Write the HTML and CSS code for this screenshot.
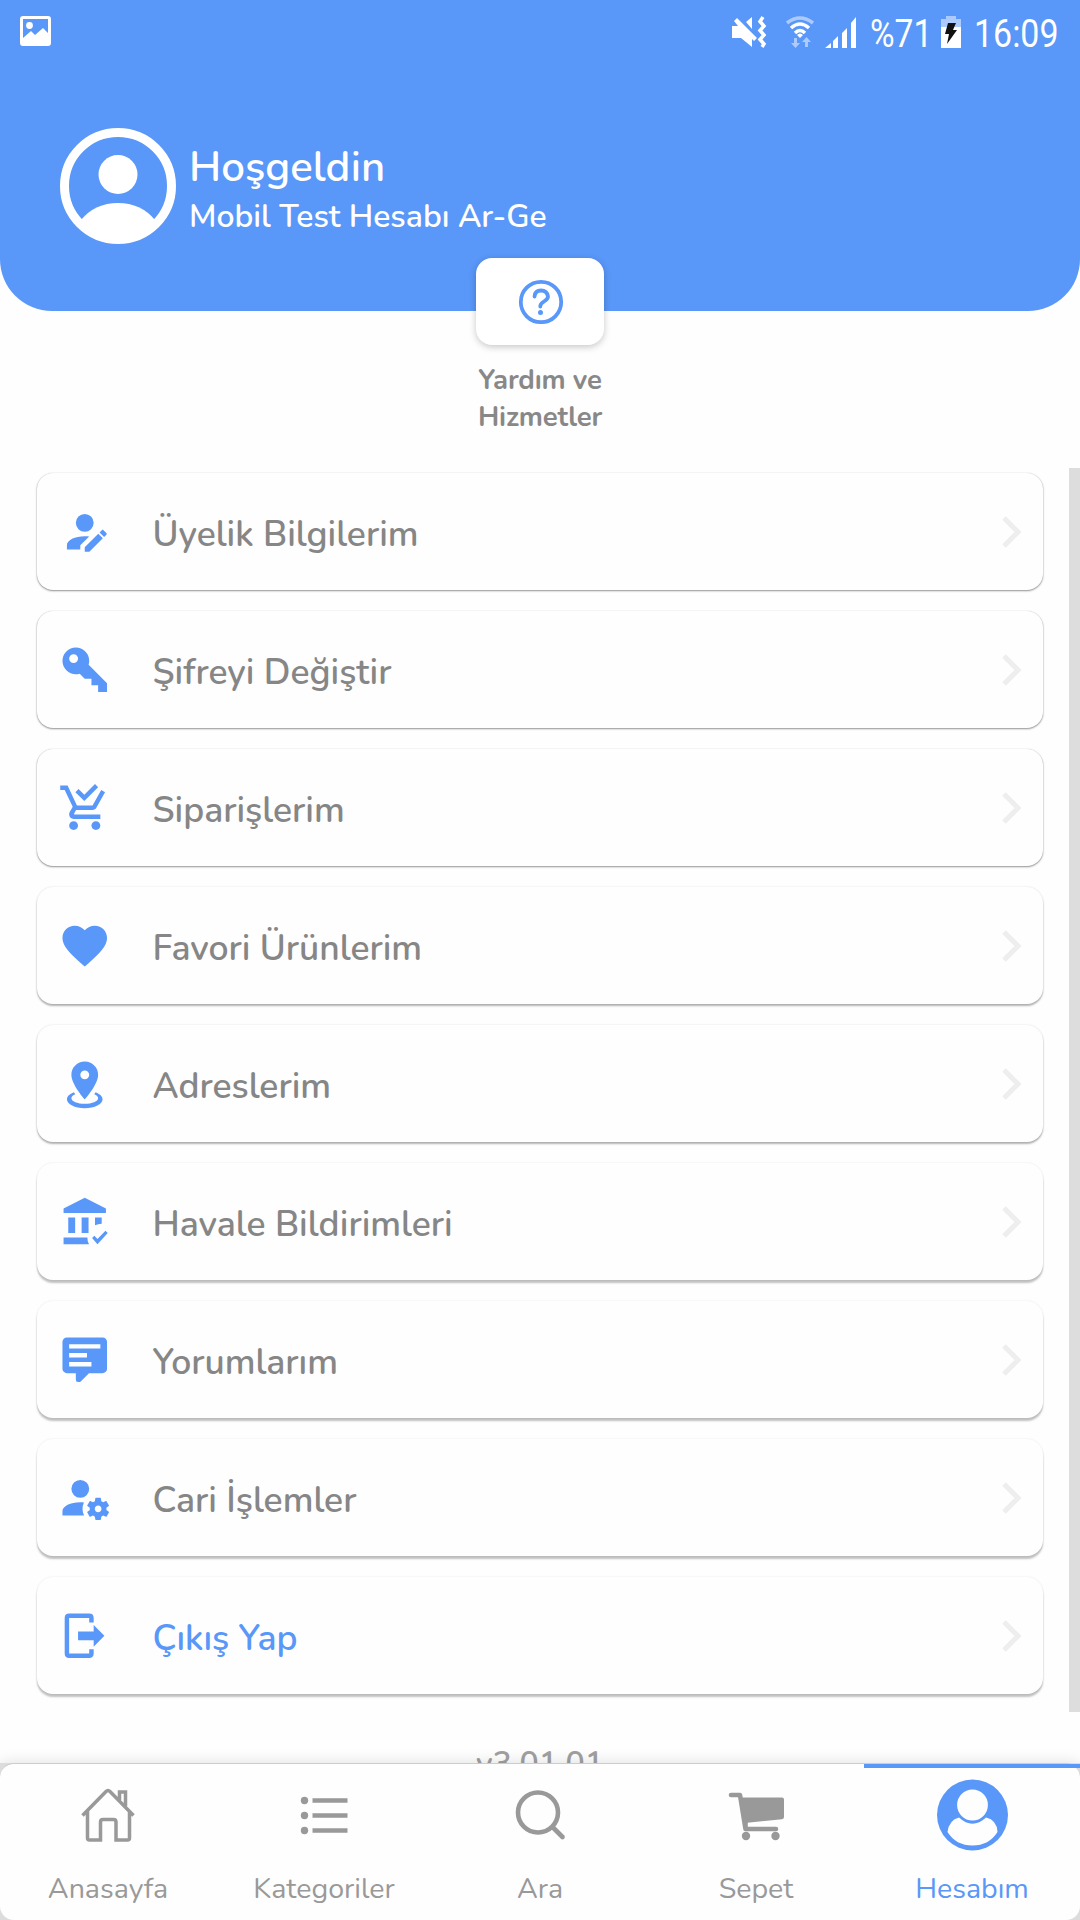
FILE: index.html
```html
<!DOCTYPE html>
<html lang="tr">
<head>
<meta charset="utf-8">
<title>Hesabım</title>
<link rel="stylesheet" href="styles.css">
</head>
<body>
<div class="screen">
  <header class="header">
    <div class="status">
      <svg class="st-image" viewBox="0 0 32 32"><path fill-rule="evenodd" d="M3 0H28Q31 0 31 3V27Q31 30 28 30H3Q0 30 0 27V3Q0 0 3 0ZM3 3V22L11 15L15 19L23 12L28 17V3Z"/><circle cx="9.500" cy="9.500" r="3.400"/></svg>
      <div class="status-right">
        <svg class="st-mute" viewBox="0 0 36 34"><path d="M0 11H6L2 6L5 3L25 23L22 26L20 24V32L9 23H0ZM14 7L20 2V14Z"/><path class="line" d="M31 2L28 6.500L32 11L28 15.500L32 20L28 24.500L32 29L30 32"/></svg>
        <svg class="st-wifi" viewBox="0 0 30 34"><g class="line"><path class="dim" d="M2 8Q15-2 28 8"/><path d="M6 13Q15 5 24 13M10 18Q15 13 20 18"/></g><path d="M12 20Q15 17 18 20L15 23Z"/><path class="dim" d="M9 23H12V28H15L10.500 33L6 28H9ZM20 32H23V27H26L21.500 22L17 27H20Z"/></svg>
        <svg class="st-signal" viewBox="0 0 32 32"><path d="M0 32L6 27V32ZM8 25L13 20V32H8ZM17 17L22 12V32H17ZM26 7L31 1V32H26Z"/></svg>
        <span class="st-text percent">%71</span>
        <svg class="st-battery" viewBox="0 0 20 32"><path class="dim" d="M5 0H15V3H20V11H0V3H5Z"/><path d="M0 11H20V32H0Z"/><path class="bolt" d="M7 7H15L12 14H16L6 28L8 18H4Z"/></svg>
        <span class="st-text clock">16:09</span>
      </div>
    </div>
    <div class="profile">
      <svg class="avatar" viewBox="0 0 116 116"><circle class="ring" cx="58" cy="58" r="53.500"/><circle cx="58" cy="46.500" r="19.500"/><path d="M21 92Q35 75 58 75T95 92Q79 113 58 113T21 92Z"/></svg>
      <div class="welcome"><div class="hello">Hoşgeldin</div><div class="name">Mobil Test Hesabı Ar-Ge</div></div>
    </div>
  </header>
  <section class="help">
    <div class="help-card"><svg viewBox="0 0 46 46"><circle cx="23" cy="23" r="20.200"/><path d="M16.500 17.500Q17 11.500 23 11.500T30 17.500Q30 20 26 22.500T22.300 27.500"/><circle class="dot" cx="22.500" cy="33.500" r="2.500"/></svg></div>
    <div class="help-label">Yardım ve<br>Hizmetler</div>
  </section>
  <main class="content">
    <ul class="menu">
      <li><svg class="icon" viewBox="0 0 24 24"><path d="M21.700 13.350L20.700 14.350L18.650 12.300L19.650 11.300C19.860 11.090 20.210 11.090 20.420 11.300L21.700 12.580C21.910 12.790 21.910 13.140 21.700 13.350M12 18.940L18.060 12.880L20.110 14.930L14.060 21H12V18.940M12 14C7.580 14 4 15.790 4 18V20H10V18.110L14 14.110C13.340 14.030 12.670 14 12 14M12 4A4 4 0 0 0 8 8A4 4 0 0 0 12 12A4 4 0 0 0 16 8A4 4 0 0 0 12 4Z"/></svg><span>Üyelik Bilgilerim</span><svg class="chevron" viewBox="0 0 20 34"><path d="M2 3L16 17L2 31"/></svg></li>
      <li><svg class="icon" viewBox="0 0 24 24"><path d="M22 18V22H18V19H15V16H12L9.740 13.740C9.190 13.910 8.610 14 8 14A6 6 0 0 1 2 8A6 6 0 0 1 8 2A6 6 0 0 1 14 8C14 8.610 13.910 9.190 13.740 9.740L22 18M7 5A2 2 0 0 0 5 7A2 2 0 0 0 7 9A2 2 0 0 0 9 7A2 2 0 0 0 7 5Z"/></svg><span>Şifreyi Değiştir</span><svg class="chevron" viewBox="0 0 20 34"><path d="M2 3L16 17L2 31"/></svg></li>
      <li><svg class="icon" viewBox="0 0 24 24"><path d="M9 20C9 21.100 8.100 22 7 22S5 21.100 5 20 5.900 18 7 18 9 18.900 9 20M17 18C15.900 18 15 18.900 15 20S15.900 22 17 22 19 21.100 19 20 18.100 18 17 18M7.200 14.800V14.700L8.100 13H15.500C16.200 13 16.900 12.600 17.200 12L21.100 5L19.400 4L15.500 11H8.500L4.300 2H1V4H3L6.600 11.600L5.200 14C5.100 14.300 5 14.600 5 15C5 16.100 5.900 17 7 17H19V15H7.400C7.300 15 7.200 14.900 7.200 14.800M18 2.800L16.600 1.400L11.800 6.200L9.200 3.600L7.800 5L11.800 9L18 2.800Z"/></svg><span>Siparişlerim</span><svg class="chevron" viewBox="0 0 20 34"><path d="M2 3L16 17L2 31"/></svg></li>
      <li><svg class="icon" viewBox="0 0 24 24"><path d="M12 21.350L10.550 20.030C5.400 15.360 2 12.270 2 8.500C2 5.410 4.420 3 7.500 3C9.240 3 10.910 3.810 12 5.080C13.090 3.810 14.760 3 16.500 3C19.580 3 22 5.410 22 8.500C22 12.270 18.600 15.360 13.450 20.030L12 21.350Z"/></svg><span>Favori Ürünlerim</span><svg class="chevron" viewBox="0 0 20 34"><path d="M2 3L16 17L2 31"/></svg></li>
      <li><svg class="icon" viewBox="0 0 24 24"><path d="M12 2C15.310 2 18 4.660 18 7.950C18 12.410 12 19 12 19C12 19 6 12.410 6 7.950C6 4.660 8.690 2 12 2M12 6A2 2 0 0 0 10 8A2 2 0 0 0 12 10A2 2 0 0 0 14 8A2 2 0 0 0 12 6M20 19C20 21.210 16.420 23 12 23C7.580 23 4 21.210 4 19C4 17.710 5.220 16.560 7.110 15.830L7.750 16.740C6.670 17.190 6 17.810 6 18.500C6 19.880 8.690 21 12 21C15.310 21 18 19.880 18 18.500C18 17.810 17.330 17.190 16.250 16.740L16.890 15.830C18.780 16.560 20 17.710 20 19Z"/></svg><span>Adreslerim</span><svg class="chevron" viewBox="0 0 20 34"><path d="M2 3L16 17L2 31"/></svg></li>
      <li><svg class="icon" viewBox="0 0 24 24"><path d="M12 1.200L2.500 6V8.100H21.500V6ZM4.600 10.100H7.700V17.100H4.600ZM10.600 10.100H13.700V17.100H10.600ZM16.600 10.100H19.600V12.900Q18 13 16.600 13.600ZM2.500 19.100H13.200Q13.100 20.700 13.900 22.100H2.500ZM15.300 19.300L17.700 22.100L22.300 17L21.300 16L17.700 19.700L16.300 18.300Z"/></svg><span>Havale Bildirimleri</span><svg class="chevron" viewBox="0 0 20 34"><path d="M2 3L16 17L2 31"/></svg></li>
      <li><svg class="icon" viewBox="0 0 24 24"><path d="M9 22A1 1 0 0 1 8 21V18H4A2 2 0 0 1 2 16V4C2 2.890 2.900 2 4 2H20A2 2 0 0 1 22 4V16A2 2 0 0 1 20 18H13.900L10.200 21.710C10 21.900 9.750 22 9.500 22H9M5 5V7H19V5H5M5 9V11H13V9H5M5 13V15H15V13H5Z"/></svg><span>Yorumlarım</span><svg class="chevron" viewBox="0 0 20 34"><path d="M2 3L16 17L2 31"/></svg></li>
      <li><svg class="icon" viewBox="0 0 24 24"><path d="M10 4A4 4 0 0 0 6 8A4 4 0 0 0 10 12A4 4 0 0 0 14 8A4 4 0 0 0 10 4M17 12C16.870 12 16.760 12.090 16.740 12.210L16.550 13.530C16.250 13.660 15.960 13.820 15.700 14L14.460 13.500C14.350 13.500 14.220 13.500 14.150 13.630L13.150 15.360C13.090 15.470 13.110 15.600 13.210 15.680L14.270 16.500C14.250 16.670 14.240 16.830 14.240 17C14.240 17.170 14.250 17.330 14.270 17.500L13.210 18.320C13.120 18.400 13.090 18.530 13.150 18.640L14.150 20.370C14.210 20.500 14.340 20.500 14.460 20.500L15.700 20C15.960 20.180 16.240 20.350 16.550 20.470L16.740 21.790C16.760 21.910 16.860 22 17 22H19C19.110 22 19.220 21.910 19.240 21.790L19.430 20.470C19.730 20.340 20 20.180 20.270 20L21.500 20.500C21.630 20.500 21.760 20.500 21.830 20.370L22.830 18.640C22.890 18.530 22.860 18.400 22.770 18.320L21.700 17.500C21.720 17.330 21.740 17.170 21.740 17C21.740 16.830 21.730 16.670 21.700 16.500L22.760 15.680C22.850 15.600 22.880 15.470 22.820 15.360L21.820 13.630C21.760 13.500 21.630 13.500 21.500 13.500L20.270 14C20 13.820 19.730 13.650 19.420 13.530L19.230 12.210C19.220 12.090 19.110 12 19 12H17M10 14C5.580 14 2 15.790 2 18V20H11.680A7 7 0 0 1 11 17A7 7 0 0 1 11.640 14.090C11.110 14.030 10.560 14 10 14M18 15.500C18.830 15.500 19.500 16.170 19.500 17C19.500 17.830 18.830 18.500 18 18.500C17.160 18.500 16.500 17.830 16.500 17C16.500 16.170 17.170 15.500 18 15.500Z"/></svg><span>Cari İşlemler</span><svg class="chevron" viewBox="0 0 20 34"><path d="M2 3L16 17L2 31"/></svg></li>
      <li class="logout"><svg class="icon" viewBox="0 0 24 24"><path d="M5 2H14Q16 2 16 4V6H14V4H5V20H14V18H16V20Q16 22 14 22H5Q3 22 3 20V4Q3 2 5 2ZM9 10.100H16V7.200L20.800 12L16 16.900V14H9Z"/></svg><span>Çıkış Yap</span><svg class="chevron" viewBox="0 0 20 34"><path d="M2 3L16 17L2 31"/></svg></li>
    </ul>
    <div class="version">v3.01.01</div>
    <div class="scrollbar"></div>
  </main>
  <div class="tabs-wrap">
  <nav class="tabs">
    <a class="tab"><svg viewBox="0 0 72 72"><path class="home" d="M10.500 36.500L34 12.500Q36 10.500 38 12.500L61.500 36.500M15.500 32V59Q15.500 61 17.500 61H28.500V43Q28.500 40.500 31 40.500H41.500Q44 40.500 44 43V61H55.500Q57.500 61 57.500 59V32M47.500 21V13H53.500V27"/></svg><span>Anasayfa</span></a>
    <a class="tab"><svg viewBox="0 0 72 72"><path class="list" d="M24.500 21.500H59.500M24.500 36.500H59.500M24.500 51.500H59.500"/><circle class="fill" cx="16.500" cy="21.500" r="3.700"/><circle class="fill" cx="16.500" cy="36.500" r="3.700"/><circle class="fill" cx="16.500" cy="51.500" r="3.700"/></svg><span>Kategoriler</span></a>
    <a class="tab"><svg viewBox="0 0 72 72"><circle class="list" cx="34" cy="33.500" r="20"/><path class="list round" d="M49 48.500L58.500 58"/></svg><span>Ara</span></a>
    <a class="tab"><svg viewBox="0 0 72 72"><path class="list round" d="M11 16H20L25.500 50H56M25.500 50V43"/><path class="fill" d="M19 18.500H62Q64 18.500 64 20.500V38Q64 40 62 40.200L25 44Z"/><circle class="fill" cx="26" cy="57" r="4.200"/><circle class="fill" cx="55.500" cy="57" r="4.200"/></svg><span>Sepet</span></a>
    <a class="tab active"><svg viewBox="0 0 72 72"><circle class="fill" cx="36.500" cy="36" r="35.500"/><circle class="white" cx="36.500" cy="26" r="15.400"/><path class="white" d="M23 38.500Q36.500 51 50 38.500Q61 41 61.500 53Q53 66.500 36.500 66.500T11.500 53Q13 41 23 38.500Z"/></svg><span>Hesabım</span></a>
  </nav>
  </div>
</div>
</body>
</html>
```
FILE: styles.css
```css
* { box-sizing: border-box; }
body { margin: 0; background: #fefefe; font-family: Nunito, "Open Sans", "Noto Sans", sans-serif; }
.screen { width: 1080px; height: 1920px; display: flex; flex-direction: column; overflow: hidden; }
.header { height: 311px; flex: none; background: #5997f8; border-radius: 0 0 52px 52px; color: #fff; }
.status { height: 64px; padding: 0 23px 0 20px; display: flex; align-items: center; justify-content: space-between; fill: #fff; }
.status-right { display: flex; align-items: center; height: 64px; }
.st-image { width: 32px; height: 32px; }
.st-mute { width: 36px; height: 34px; margin-right: 17px; }
.st-wifi { width: 30px; height: 34px; margin-right: 10px; }
.st-signal { width: 32px; height: 32px; margin-right: 13px; }
.st-battery { width: 20px; height: 32px; margin-right: 13px; }
.line { fill: none; stroke: #fff; stroke-width: 3.500; }
.dim { opacity: .5; }
.bolt { fill: #111; }
.st-text { font: 39px/44px Roboto, sans-serif; transform-origin: left center; margin-top: 3px; }
.percent { width: 71px; transform: scaleX(.86); }
.clock { width: 83px; transform: scaleX(.87); }
.profile { display: flex; gap: 13px; padding: 63.500px 0 0 60px; }
.avatar { width: 116px; height: 116px; fill: #fff; }
.avatar .ring { fill: none; stroke: #fff; stroke-width: 9; }
.welcome { padding-top: 13px; }
.hello { font-size: 42px; line-height: 54px; font-weight: 600; }
.name { font-size: 31.900px; line-height: 44px; font-weight: 600; }
.help { position: relative; margin-top: -53px; flex: none; display: flex; flex-direction: column; align-items: center; height: 210px; }
.help-card { width: 128px; height: 87px; background: #fff; border-radius: 16px; box-shadow: 0 2px 7px rgba(0,0,0,.22); display: flex; align-items: center; justify-content: center; }
.help-card svg { width: 46px; height: 46px; margin-left: 2px; fill: none; stroke: #5997f8; stroke-width: 3.800; stroke-linecap: round; }
.help-card .dot { fill: #5997f8; stroke: none; }
.help-label { margin-top: 17px; font-size: 27.500px; line-height: 37px; font-weight: 700; letter-spacing: -.15px; color: #888; text-align: center; }
.content { position: relative; height: 1295px; flex: none; overflow: hidden; padding: 5px 37px 0; }
.menu { list-style: none; margin: 0; padding: 0; display: flex; flex-direction: column; gap: 21px; }
.menu li { height: 117px; border-radius: 16px; background: #fefefe; padding: 0 21px 0 20.500px; display: flex; align-items: center; color: #868686; font-size: 35.500px; font-weight: 600; box-shadow: 0 1px 2px rgba(0,0,0,.42), 0 0 1px rgba(0,0,0,.22); }
.menu li:nth-child(n+4) { box-shadow: 0 2px 2px rgba(0,0,0,.29), 0 0 2px rgba(0,0,0,.13); }
.menu li:nth-child(n+6) { box-shadow: 0 3px 2px rgba(0,0,0,.24), 0 0 2px rgba(0,0,0,.1); }
.icon { width: 53.500px; height: 53.500px; fill: #5997f8; fill-rule: evenodd; flex: none; }
.menu span { flex: 1; margin: 5px 0 0 41.500px; white-space: nowrap; }
.menu .logout { color: #5997f8; }
.chevron { width: 20px; height: 34px; fill: none; stroke: #eee; stroke-width: 5; }
.version { margin-top: 48px; text-align: center; font-size: 32px; line-height: 44px; font-weight: 600; color: #a0a0a0; }
.scrollbar { position: absolute; right: 0; top: 0; width: 11px; height: 1244px; background: #ddd; }
.tabs-wrap { position: relative; height: 157px; flex: none; background: #dcdcdc; box-shadow: 0 0 14px rgba(0,0,0,.13); }
.tabs { height: 157px; display: grid; grid-template-columns: repeat(5, 1fr); background: #fefefe; border-top: 1px solid #ccc; border-radius: 14px; }
.tab { display: flex; flex-direction: column; align-items: center; padding-top: 15px; color: #999; font-size: 28.600px; line-height: 40px; }
.tab svg { width: 72px; height: 72px; fill: none; stroke-width: 3.500; }
.tab span { margin-top: 18px; }
.home { stroke: #999; }
.list { stroke: #999; stroke-width: 4.600; }
.round { stroke-linecap: round; stroke-linejoin: round; }
.fill { fill: currentColor; }
.white { fill: #fefefe; }
.active { color: #5997f8; border-top: 4px solid #5997f8; padding-top: 11px; }
```
